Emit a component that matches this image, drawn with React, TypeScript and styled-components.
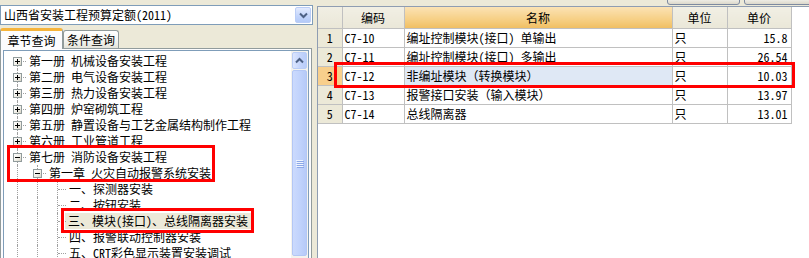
import React from 'react';
import styled, { createGlobalStyle, css } from 'styled-components';

const GlobalStyle = createGlobalStyle`
  html, body { margin: 0; padding: 0; background: #ECE9D8; }
  body {
    font-family: "Noto Sans Mono CJK SC", "Noto Sans CJK SC", "DejaVu Sans", sans-serif;
    font-size: 12px;
    color: #000;
  }
  * { box-sizing: border-box; }
`;

const Window = styled.div`
  display: flex;
  width: 809px;
  height: 258px;
  overflow: hidden;
  background: #ECE9D8;
`;

/* ---------- left pane ---------- */
const LeftPane = styled.div`
  width: 313px;
  flex: none;
  height: 290px;
  display: flex;
  flex-direction: column;
  padding-top: 5px;
`;

const Combo = styled.div`
  height: 20px;
  flex: none;
  border: 1px solid #7F9DB9;
  background: #fff;
  display: flex;
  align-items: center;
  padding-left: 3px;
`;

const ComboText = styled.span`
  flex: 1;
  white-space: nowrap;
  line-height: 16px;
`;

const ComboButton = styled.div`
  width: 16px;
  height: 16px;
  margin-right: 1px;
  border: 1px solid #BACDF6;
  border-radius: 2px;
  background: linear-gradient(#E3EBFE, #C2D4FB 60%, #B4CAF8);
  display: flex;
  align-items: center;
  justify-content: center;
`;

const TabStrip = styled.div`
  height: 23px;
  flex: none;
  display: flex;
  align-items: flex-end;
  position: relative;
  z-index: 1;
`;

const Tab = styled.div<{ $active?: boolean }>`
  display: flex;
  align-items: center;
  justify-content: center;
  white-space: nowrap;
  border: 1px solid #919B9C;
  border-bottom: none;
  border-radius: 3px 3px 0 0;
  ${(p) =>
    p.$active
      ? css`
          width: 63px;
          height: 21px;
          margin-bottom: -1px;
          background: #FCFCFE;
          border-top: 3px solid #F6B43C;
          padding-top: 0;
        `
      : css`
          width: 56px;
          height: 18px;
          margin-left: 0;
          background: linear-gradient(#FFFFFF, #F3F3EF 60%, #E4E3DA);
        `}
`;

const TabPanel = styled.div`
  flex: 1;
  border: 1px solid #919B9C;
  background: #FCFCFE;
  padding: 1px 2px 0 2px;
  display: flex;
  margin-right: 1px;
`;

const TreeBox = styled.div`
  flex: 1;
  border: 1px solid #7F9DB9;
  background: #fff;
  display: flex;
`;

const TreeContent = styled.div`
  flex: 1;
  position: relative;
  padding: 2px 0 0 3px;
`;

const TreeRow = styled.div`
  height: 16px;
  display: flex;
  align-items: stretch;
  white-space: nowrap;
`;

const Guide = styled.div<{ $vert: 'full' | 'lower' | 'none'; $horiz?: boolean }>`
  width: 20px;
  flex: none;
  position: relative;
  ${(p) =>
    p.$vert !== 'none' &&
    css`
      &::before {
        content: '';
        position: absolute;
        left: 10px;
        top: ${p.$vert === 'lower' ? '8px' : '0'};
        bottom: 0;
        border-left: 1px dotted #A0A0A0;
      }
    `}
  ${(p) =>
    p.$horiz &&
    css`
      &::after {
        content: '';
        position: absolute;
        left: 11px;
        right: 1px;
        top: 8px;
        border-top: 1px dotted #A0A0A0;
      }
    `}
`;

const Expander = styled.span`
  position: absolute;
  left: 6px;
  top: 4px;
  width: 9px;
  height: 9px;
  border: 1px solid #919B9C;
  background: linear-gradient(135deg, #FFFFFF, #F0EEE6 60%, #D8D4C6);
  z-index: 1;
`;

const SignBar = styled.span<{ $vertical?: boolean }>`
  position: absolute;
  background: #000;
  ${(p) =>
    p.$vertical
      ? css`
          left: 3px;
          top: 1px;
          width: 1px;
          height: 5px;
        `
      : css`
          left: 1px;
          top: 3px;
          width: 5px;
          height: 1px;
        `}
`;

const TreeLabel = styled.span<{ $selected?: boolean }>`
  line-height: 16px;
  margin-left: 1px;
  padding: 0 1px;
  ${(p) =>
    p.$selected &&
    css`
      background: #ECE9D8;
      padding: 0 3px;
      margin-left: -2px;
    `}
`;

const Scrollbar = styled.div`
  width: 17px;
  flex: none;
  display: flex;
  flex-direction: column;
  align-items: stretch;
  background: #F4F3EE;
  padding: 1px 1px 0 1px;
`;

const ScrollButton = styled.div`
  height: 17px;
  flex: none;
  border: 1px solid #BACDF6;
  border-radius: 2px;
  background: linear-gradient(90deg, #DCE6FE, #C6D6FC 50%, #B8CCF9);
  display: flex;
  align-items: center;
  justify-content: center;
  margin-bottom: 1px;
`;

const Thumb = styled.div`
  height: 186px;
  flex: none;
  border: 1px solid #B3C7F5;
  border-radius: 2px;
  background: linear-gradient(90deg, #CBDAFD, #C1D3FC 50%, #B6CAF8);
  display: flex;
  flex-direction: column;
  align-items: center;
  justify-content: center;
  gap: 1px;
`;

const Grip = styled.span`
  width: 7px;
  height: 1px;
  background: #EEF4FE;
  box-shadow: 1px 1px 0 #8CA8E8;
`;

const Annotation = styled.div<{ $l: number; $t: number; $w: number; $h: number }>`
  position: absolute;
  left: ${(p) => p.$l}px;
  top: ${(p) => p.$t}px;
  width: ${(p) => p.$w}px;
  height: ${(p) => p.$h}px;
  border: 3px solid #FF0000;
  pointer-events: none;
  z-index: 2;
`;

/* ---------- splitter ---------- */
const Splitter = styled.div`
  width: 4px;
  flex: none;
  background: #ECE9D8;
`;

/* ---------- right pane ---------- */
const RightPane = styled.div`
  flex: 1;
  display: flex;
  flex-direction: column;
  min-width: 0;
`;

const ToolStrip = styled.div`
  height: 6px;
  flex: none;
  display: flex;
  align-items: flex-end;
  gap: 4px;
  padding-left: 350px;
  overflow: hidden;
`;

const ToolButton = styled.div<{ $w: number }>`
  width: ${(p) => p.$w}px;
  height: 20px;
  flex: none;
  margin-bottom: 1px;
  border: 1px solid #7D8AA0;
  border-radius: 3px;
  background: linear-gradient(#FFFFFF, #F4F3EE 70%, #DCD8CB);
`;

const GridBox = styled.div`
  flex: 1;
  position: relative;
  border-left: 1px solid #8F9DB2;
  border-top: 1px solid #8F9DB2;
  background: #fff;
`;

const Table = styled.table`
  border-collapse: collapse;
  table-layout: fixed;
  width: 473px;
`;

const HeadCell = styled.th<{ $w: number; $sorted?: boolean }>`
  width: ${(p) => p.$w}px;
  height: 21px;
  padding: 0;
  font-weight: normal;
  text-align: center;
  border-right: 1px solid #C0C0C0;
  border-bottom: 1px solid #C0C0C0;
  background: ${(p) =>
    p.$sorted ? 'linear-gradient(#FBE2B4, #F6CF84 60%, #F0BF63)' : 'linear-gradient(#F1EFE4, #EAE7D8)'};
`;

const NumCell = styled.td<{ $active?: boolean }>`
  height: 19px;
  padding: 0;
  text-align: center;
  border-right: 1px solid #C0C0C0;
  border-bottom: 1px solid #C0C0C0;
  background: ${(p) => (p.$active ? '#F8CF8C' : '#ECE9D8')};
`;

const Cell = styled.td<{ $align?: 'left' | 'right'; $focus?: boolean }>`
  height: 19px;
  padding: 0 ${(p) => (p.$align === 'right' ? '3px' : '1px')} 0 ${(p) => (p.$align === 'right' ? '0' : '2px')};
  text-align: ${(p) => p.$align ?? 'left'};
  white-space: nowrap;
  overflow: hidden;
  border-right: 1px solid #C0C0C0;
  border-bottom: 1px solid #C0C0C0;
  background: ${(p) => (p.$focus ? '#DFE8F5' : '#fff')};
`;

/* ---------- icons ---------- */
const ChevronDown = () => (
  <svg width="9" height="7" viewBox="0 0 9 7">
    <path d="M1 1.5 L4.5 5 L8 1.5" fill="none" stroke="#4D6185" strokeWidth="2" />
  </svg>
);
const ChevronUp = () => (
  <svg width="9" height="7" viewBox="0 0 9 7">
    <path d="M1 5.5 L4.5 2 L8 5.5" fill="none" stroke="#4D6185" strokeWidth="2" />
  </svg>
);

type Node = { level: number; label: string; exp?: '+' | '-'; selected?: boolean };

const tree: Node[] = [
  { level: 0, label: '第一册 机械设备安装工程', exp: '+' },
  { level: 0, label: '第二册 电气设备安装工程', exp: '+' },
  { level: 0, label: '第三册 热力设备安装工程', exp: '+' },
  { level: 0, label: '第四册 炉窑砌筑工程', exp: '+' },
  { level: 0, label: '第五册 静置设备与工艺金属结构制作工程', exp: '+' },
  { level: 0, label: '第六册 工业管道工程', exp: '+' },
  { level: 0, label: '第七册 消防设备安装工程', exp: '-' },
  { level: 1, label: '第一章 火灾自动报警系统安装', exp: '-' },
  { level: 2, label: '一、探测器安装' },
  { level: 2, label: '二、按钮安装' },
  { level: 2, label: '三、模块(接口)、总线隔离器安装', selected: true },
  { level: 2, label: '四、报警联动控制器安装' },
  { level: 2, label: '五、CRT彩色显示装置安装调试' },
];

const rows = [
  { n: 1, code: 'C7-10', name: '编址控制模块(接口) 单输出', unit: '只', price: '15.8' },
  { n: 2, code: 'C7-11', name: '编址控制模块(接口) 多输出', unit: '只', price: '26.54' },
  { n: 3, code: 'C7-12', name: '非编址模块（转换模块）', unit: '只', price: '10.03', active: true },
  { n: 4, code: 'C7-13', name: '报警接口安装（输入模块）', unit: '只', price: '13.97' },
  { n: 5, code: 'C7-14', name: '总线隔离器', unit: '只', price: '13.01' },
];

const Sign = ({ exp }: { exp: '+' | '-' }) => (
  <Expander>
    <SignBar />
    {exp === '+' && <SignBar $vertical />}
  </Expander>
);

const TreeItem = ({ node, first }: { node: Node; first: boolean }) => {
  const guides = [];
  for (let i = 0; i < node.level; i++) {
    guides.push(<Guide key={i} $vert="full" />);
  }
  const vert = first ? 'lower' : 'full';
  return (
    <TreeRow>
      {guides}
      <Guide $vert={vert} $horiz>
        {node.exp && <Sign exp={node.exp} />}
      </Guide>
      <TreeLabel $selected={node.selected}>{node.label}</TreeLabel>
    </TreeRow>
  );
};

export default function App() {
  return (
    <>
      <GlobalStyle />
      <Window>
        <LeftPane>
          <Combo>
            <ComboText>山西省安装工程预算定额(2011)</ComboText>
            <ComboButton>
              <ChevronDown />
            </ComboButton>
          </Combo>
          <TabStrip>
            <Tab $active>章节查询</Tab>
            <Tab>条件查询</Tab>
          </TabStrip>
          <TabPanel>
            <TreeBox>
              <TreeContent>
                {tree.map((n, i) => (
                  <TreeItem key={i} node={n} first={i === 0} />
                ))}
                <Annotation $l={3} $t={94} $w={208} $h={37} />
                <Annotation $l={57} $t={157} $w={193} $h={25} />
              </TreeContent>
              <Scrollbar>
                <ScrollButton>
                  <ChevronUp />
                </ScrollButton>
                <Thumb>
                  <Grip />
                  <Grip />
                  <Grip />
                  <Grip />
                </Thumb>
              </Scrollbar>
            </TreeBox>
          </TabPanel>
        </LeftPane>
        <Splitter />
        <RightPane>
          <ToolStrip>
            <ToolButton $w={73} />
            <ToolButton $w={80} />
          </ToolStrip>
          <GridBox>
            <Table>
              <thead>
                <tr>
                  <HeadCell $w={24} />
                  <HeadCell $w={62}>编码</HeadCell>
                  <HeadCell $w={268} $sorted>
                    名称
                  </HeadCell>
                  <HeadCell $w={55}>单位</HeadCell>
                  <HeadCell $w={64}>单价</HeadCell>
                </tr>
              </thead>
              <tbody>
                {rows.map((r) => (
                  <tr key={r.n}>
                    <NumCell $active={r.active}>{r.n}</NumCell>
                    <Cell>{r.code}</Cell>
                    <Cell $focus={r.active}>{r.name}</Cell>
                    <Cell>{r.unit}</Cell>
                    <Cell $align="right">{r.price}</Cell>
                  </tr>
                ))}
              </tbody>
            </Table>
            <Annotation $l={16} $t={55} $w={461} $h={26} />
          </GridBox>
        </RightPane>
      </Window>
    </>
  );
}
